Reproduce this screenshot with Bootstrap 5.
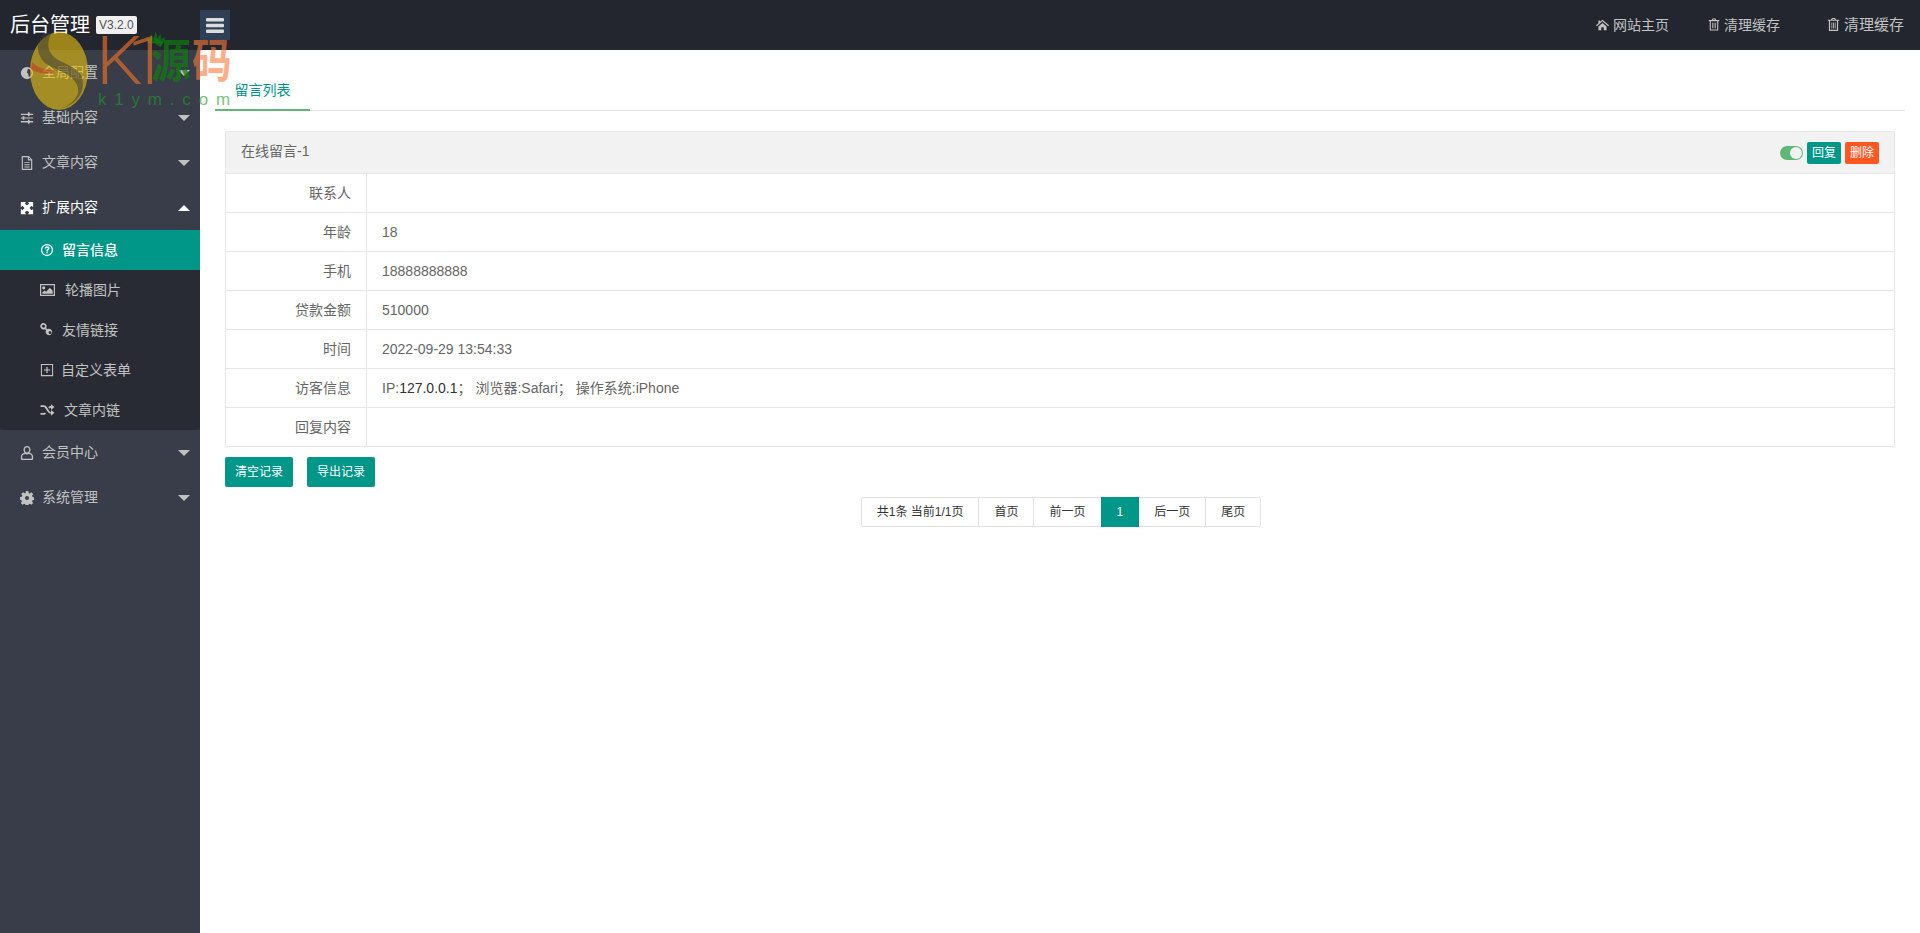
<!DOCTYPE html>
<html lang="zh-CN">
<head>
<meta charset="utf-8">
<title>后台管理</title>
<link href="https://cdn.jsdelivr.net/npm/bootstrap@5.3.0/dist/css/bootstrap.min.css" rel="stylesheet">
<style>
html,body{height:100%;}
body{font-family:"Liberation Sans","Noto Sans CJK SC",sans-serif;font-size:14px;color:#666;background:#fff;overflow:hidden;}
a{text-decoration:none;}
.top-bar{height:50px;background:#23262e;flex:none;}
.brand-area{width:200px;padding-left:10px;flex:none;}
.brand-name{font-size:20px;color:#fff;line-height:50px;}
.brand-ver{font-size:12px;background:#f0f0f0;color:#555;border-radius:2px;padding:0 3px;height:18px;line-height:18px;margin-left:6px;}
.menu-toggle{width:30px;height:30px;background:#2f4056;}
.top-link{color:#c2c2c2;font-size:14px;line-height:50px;}
.top-link svg{width:13px;height:13px;margin-right:4px;vertical-align:-1px;fill:#c2c2c2;}
.top-link.wide{font-size:15px;margin-left:47px;}
.top-link.mid{margin-left:39px;}
.top-link.mid svg{width:12px;}
.main-wrap{height:883px;}
.side-col{width:200px;background:#393d49;flex:none;}
.side-head{height:45px;color:#c2c2c2;padding-left:20px;padding-right:10px;}
.side-head.is-open{color:#fff;}
.side-head svg{width:14px;height:14px;margin-right:8px;fill:currentColor;flex:none;}
.tri{width:0;height:0;border-left:6px solid transparent;border-right:6px solid transparent;border-top:6px solid #c2c2c2;margin-left:auto;}
.tri.up{border-top:0;border-bottom:6px solid #fff;}
.side-sub{background:#282b33;border-radius:0 0 2px 2px;}
.side-child{height:40px;padding-left:40px;color:#c2c2c2;}
.side-child svg{width:14px;height:14px;margin-right:8px;fill:currentColor;flex:none;}
.side-child svg.ico-w{width:15px;margin-right:10px;}
.side-child svg.ico-m{margin-right:8px;}
.side-child svg.ico-p{margin-right:7px;}
.side-child svg.ico-r{width:15px;margin-right:9px;}
.side-child.is-active{background:#009688;color:#fff;font-weight:500;}
.body-col{padding:0 15px;min-width:0;}
.tab-strip{height:61px;border-bottom:1px solid #e6e6e6;}
.tab-item{width:95px;height:61px;color:#009688;border-bottom:2px solid #5fb878;text-align:center;padding-top:30px;line-height:20px;}
.msg-box{margin:20px 10px 0 10px;border:1px solid #e6e6e6;border-bottom:0;}
.msg-head{height:42px;background:#f2f2f2;padding:0 15px;border-bottom:1px solid #e6e6e6;}
.msg-title{margin-bottom:3px;}
.msg-sw{width:23px;height:14px;background:#5fb878;border-radius:7px;position:relative;margin-right:4px;}
.msg-sw::after{content:"";position:absolute;right:1px;top:1px;width:12px;height:12px;background:#f2f2f2;border-radius:50%;}
.mini-btn{height:22px;line-height:22px;width:34px;padding:0;font-size:12px;color:#fff;border:0;border-radius:2px;}
.mini-btn.teal{background:#009688;}
.mini-btn.red{background:#ff5722;margin-left:4px;}
.msg-table{margin:0;color:#666;font-size:14px;table-layout:fixed;border-collapse:separate;border-spacing:0;--bs-table-color:#666;}
.msg-table td{padding:0 15px;line-height:38px;height:39px;border-bottom:1px solid #e6e6e6;}
.msg-table td:first-child{width:141px;text-align:right;padding:0 15px 0 0;border-right:1px solid #e6e6e6;}
.msg-ip{color:#333;}
.action-row{margin:10px 10px 0;gap:14px;}
.act-btn{width:68px;height:30px;padding:0;line-height:30px;font-size:12px;color:#fff;background:#009688;border:0;border-radius:2px;}
.act-btn:hover{background:#009688;color:#fff;}
.pager-row{margin-top:10px;margin-left:2px;}
.pager-row .pagination{margin:0;--bs-pagination-border-color:#e2e2e2;--bs-pagination-color:#333;--bs-pagination-font-size:12px;--bs-pagination-padding-x:15px;--bs-pagination-padding-y:0;--bs-pagination-active-bg:#009688;--bs-pagination-active-border-color:#009688;--bs-pagination-border-radius:2px;}
.pager-row .page-link{height:30px;line-height:28px;}
.stamp{position:absolute;left:0;top:0;width:240px;height:115px;pointer-events:none;z-index:5;}
.stamp-art{position:absolute;left:30px;top:30px;width:140px;height:80px;overflow:visible;}
.stamp-k{position:absolute;left:96px;top:27px;font-size:66px;line-height:70px;color:#e8702a;opacity:.65;letter-spacing:-14px;font-family:Roboto,"Liberation Sans",sans-serif;font-weight:300;transform:scaleX(1.12);transform-origin:left center;}
.stamp-y,.stamp-m{position:absolute;top:36px;font-size:46px;line-height:50px;font-weight:700;transform:scaleX(.86);transform-origin:left center;}
.stamp-y{left:151px;color:#0f7a10;opacity:.72;}
.stamp-m{left:192px;color:#ff7a3a;opacity:.6;}
.stamp-u{position:absolute;left:98px;top:91px;font-size:17px;line-height:18px;letter-spacing:7.8px;color:#1f9a2a;opacity:.6;}
</style>
</head>
<body>
<svg width="0" height="0" class="d-none">
<symbol id="i-globe" viewBox="0 0 16 16"><path d="M8 1a7 7 0 1 0 0 14A7 7 0 0 0 8 1zM9 3l3.500 1.500L13.500 8 12 11.500 10 12.500 9.500 9 8 7.500 8.500 5z" fill-rule="evenodd"/></symbol>
<symbol id="i-slide" viewBox="0 0 16 16"><path d="M1 3h8V1.500h2V3h4v1.500h-4V6H9V4.500H1zM1 7.300h2V6h2v1.300h10v1.400H5V10H3V8.700H1zM1 11.500h8V10h2v1.500h4V13h-4v1.500H9V13H1z"/></symbol>
<symbol id="i-file" viewBox="0 0 16 16"><path d="M2 0h8l4 4v12H2zM3.300 1.300v13.400h9.400V5H9V1.300zM10.300 1.700V3.800h2.100zM5 7h6v1H5zM5 9.500h6v1H5zM5 12h6v1H5z" fill-rule="evenodd"/></symbol>
<symbol id="i-expand" viewBox="0 0 16 16"><path d="M1 1h6L5.500 2.800 8 5.200 10.500 2.800 9 1h6v6l-1.800-1.500L10.800 8l2.400 2.500L15 9v6H9l1.500-1.800L8 10.800l-2.500 2.400L7 15H1V9l1.800 1.500L5.200 8 2.800 5.500 1 7z"/></symbol>
<symbol id="i-help" viewBox="0 0 16 16"><path d="M8 1a7 7 0 1 0 0 14A7 7 0 0 0 8 1zm0 1.500a5.500 5.500 0 1 1 0 11 5.500 5.500 0 0 1 0-11zM5.300 6.300C5.500 4.700 6.600 3.800 8.100 3.800c1.600 0 2.700 1 2.700 2.300 0 1-.6 1.600-1.400 2.100-.5.300-.6.600-.6 1.100H7.200c0-1 .3-1.600 1-2.100.6-.4.900-.7.900-1.100 0-.5-.4-.8-1-.8s-1 .4-1.100 1zM7.200 10h1.600v1.600H7.200z" fill-rule="evenodd"/></symbol>
<symbol id="i-pic" viewBox="0 0 16 15" preserveAspectRatio="none"><path d="M0 1h16v13H0zM1.300 2.300v10.400h13.400V2.300zM4 3.500a1.700 1.700 0 1 1 0 3.400 1.700 1.700 0 0 1 0-3.400zM2.500 11.500v-1.500L5 8l1.500 1.300L10.500 5l3 3.200v3.300z" fill-rule="evenodd"/></symbol>
<symbol id="i-link" viewBox="0 0 16 16"><path d="M4 0a3.700 3.700 0 0 1 3 5.700L8.300 7A3.700 3.700 0 1 1 7 8.300L5.700 7A3.700 3.700 0 1 1 4 0zm0 2a1.700 1.700 0 1 0 0 3.400A1.700 1.700 0 0 0 4 2zm7.500 7.300a1.700 1.700 0 1 0 0 3.400 1.700 1.700 0 0 0 0-3.400z" fill-rule="evenodd"/></symbol>
<symbol id="i-plus" viewBox="0 0 16 16"><path d="M1 1h14v14H1zM2.200 2.200v11.600h11.600V2.200zM7.300 4.500h1.400v2.800h2.800v1.400H8.700v2.800H7.300V8.700H4.500V7.300h2.800z" fill-rule="evenodd"/></symbol>
<symbol id="i-rand" viewBox="0 0 16 16"><path d="M0 2.500h3.500c2 0 3 1 4 2.500L10 9c.7 1 1.200 1.500 2 1.500V8l4 3.200-4 3.300V12c-2 0-3-.8-4-2.300L5.500 6C4.800 5 4.400 4.500 3.500 4.500H0zM12 1.500l4 3.200-4 3.300V5.500c-.8 0-1.300.4-1.800 1.100L9 4.800C9.800 3.700 10.700 3.500 12 3.500zM0 11.500h3.500c.7 0 1.100-.4 1.500-1l1.200 1.700c-.7.900-1.500 1.300-2.700 1.300H0z"/></symbol>
<symbol id="i-user" viewBox="0 0 16 16"><path d="M8 0c2.300 0 4 1.800 4 4.300 0 1.300-.5 2.500-1.200 3.300C13 8 15 9.500 15 12v2.500C15 15.300 14.300 16 13.500 16h-11C1.700 16 1 15.300 1 14.500V12c0-2.500 2-4 4.200-4.400C4.500 6.800 4 5.600 4 4.300 4 1.800 5.700 0 8 0zm0 1.500c-1.500 0-2.500 1.200-2.500 2.800S6.500 7.500 8 7.500s2.500-1.600 2.500-3.200S9.500 1.500 8 1.500zM6.300 9C4 9 2.500 10 2.500 12v2c0 .3.200.5.500.5h10c.3 0 .5-.2.500-.5v-2c0-2-1.500-3-3.800-3-.8.500-1.600.7-1.700.7s-.9-.2-1.700-.7z" fill-rule="evenodd"/></symbol>
<symbol id="i-cog" viewBox="0 0 16 16"><path d="M6.500 0h3l.4 2.200 1.300.6L13.100 1.500l2 2.200-1.300 1.800.5 1.300 2.200.4v3l-2.200.4-.5 1.300 1.300 1.800-2.100 2.100-1.800-1.300-1.300.5-.4 2.200h-3l-.4-2.200-1.300-.5-1.800 1.300-2.100-2.100 1.300-1.800-.5-1.300L0 9.900v-3l2.200-.4.500-1.300L1.400 3.400l2.100-2 1.800 1.300 1.300-.5zM8 5.800a2.300 2.300 0 1 0 0 4.600 2.300 2.300 0 0 0 0-4.600z" fill-rule="evenodd"/></symbol>
<symbol id="i-home" viewBox="0 0 16 16"><path d="M8 2 16 9l-1 1-7-6-7 6-1-1 3-2.600V3h2v1.700zM3 10.500 8 6l5 4.500V15H9.500v-3.500h-3V15H3z"/></symbol>
<symbol id="i-trash" viewBox="0 0 16 16"><path d="M6 0h4l1 2h4v1.500h-1.300V16H2.300V3.500H1V2h4zM7 1.200 6.500 2h3L9 1.200zM3.800 3.500v11h8.400v-11zM5.500 5.500h1v7.500h-1zM7.500 5.500h1v7.500h-1zM9.500 5.500h1v7.500h-1z" fill-rule="evenodd"/></symbol>
</svg>

<header class="top-bar d-flex align-items-center">
  <div class="brand-area d-flex align-items-center">
    <span class="brand-name">后台管理</span><span class="brand-ver">V3.2.0</span>
  </div>
  <button class="menu-toggle btn p-0 border-0 rounded-0 d-flex justify-content-center align-items-center" aria-label="menu">
    <svg width="18" height="15" viewBox="0 0 18 15"><path d="M1 0h16a1 1 0 0 1 1 1v1.500a1 1 0 0 1-1 1H1a1 1 0 0 1-1-1V1a1 1 0 0 1 1-1zM1 5.800h16a1 1 0 0 1 1 1v1.400a1 1 0 0 1-1 1H1a1 1 0 0 1-1-1V6.800a1 1 0 0 1 1-1zM1 11.500h16a1 1 0 0 1 1 1V14a1 1 0 0 1-1 1H1a1 1 0 0 1-1-1v-1.500a1 1 0 0 1 1-1z" fill="#dcdcdc"/></svg>
  </button>
  <nav class="ms-auto d-flex pe-3">
    <a class="top-link" href="#"><svg><use href="#i-home"/></svg>网站主页</a>
    <a class="top-link mid" href="#"><svg><use href="#i-trash"/></svg>清理缓存</a>
    <a class="top-link wide" href="#"><svg><use href="#i-trash"/></svg>清理缓存</a>
  </nav>
</header>

<div class="main-wrap d-flex">
  <aside class="side-col d-flex flex-column">
    <a class="side-head d-flex align-items-center" href="#"><svg><use href="#i-globe"/></svg>全局配置<span class="tri"></span></a>
    <a class="side-head d-flex align-items-center" href="#"><svg><use href="#i-slide"/></svg>基础内容<span class="tri"></span></a>
    <a class="side-head d-flex align-items-center" href="#"><svg><use href="#i-file"/></svg>文章内容<span class="tri"></span></a>
    <a class="side-head is-open d-flex align-items-center" href="#"><svg><use href="#i-expand"/></svg>扩展内容<span class="tri up"></span></a>
    <div class="side-sub">
      <a class="side-child is-active d-flex align-items-center" href="#"><svg><use href="#i-help"/></svg>留言信息</a>
      <a class="side-child d-flex align-items-center" href="#"><svg class="ico-w"><use href="#i-pic"/></svg>轮播图片</a>
      <a class="side-child d-flex align-items-center" href="#"><svg class="ico-m"><use href="#i-link"/></svg>友情链接</a>
      <a class="side-child d-flex align-items-center" href="#"><svg class="ico-p"><use href="#i-plus"/></svg>自定义表单</a>
      <a class="side-child d-flex align-items-center" href="#"><svg class="ico-r"><use href="#i-rand"/></svg>文章内链</a>
    </div>
    <a class="side-head d-flex align-items-center" href="#"><svg><use href="#i-user"/></svg>会员中心<span class="tri"></span></a>
    <a class="side-head d-flex align-items-center" href="#"><svg><use href="#i-cog"/></svg>系统管理<span class="tri"></span></a>
  </aside>

  <main class="body-col flex-grow-1">
    <div class="tab-strip"><div class="tab-item">留言列表</div></div>
    <section class="msg-box">
      <div class="msg-head d-flex align-items-center">
        <span class="msg-title">在线留言-1</span>
        <span class="msg-sw ms-auto"></span>
        <button class="mini-btn teal">回复</button>
        <button class="mini-btn red">删除</button>
      </div>
      <table class="table table-borderless msg-table">
        <tbody>
          <tr><td>联系人</td><td></td></tr>
          <tr><td>年龄</td><td>18</td></tr>
          <tr><td>手机</td><td>18888888888</td></tr>
          <tr><td>贷款金额</td><td>510000</td></tr>
          <tr><td>时间</td><td>2022-09-29 13:54:33</td></tr>
          <tr><td>访客信息</td><td>IP:<span class="msg-ip">127.0.0.1</span>；&nbsp;浏览器:Safari；&nbsp;操作系统:iPhone</td></tr>
          <tr><td>回复内容</td><td></td></tr>
        </tbody>
      </table>
    </section>
    <div class="action-row d-flex">
      <button class="btn act-btn">清空记录</button>
      <button class="btn act-btn">导出记录</button>
    </div>
    <nav class="pager-row d-flex justify-content-center">
      <ul class="pagination">
        <li class="page-item"><span class="page-link">共1条 当前1/1页</span></li>
        <li class="page-item"><a class="page-link" href="#">首页</a></li>
        <li class="page-item"><a class="page-link" href="#">前一页</a></li>
        <li class="page-item active"><a class="page-link" href="#">1</a></li>
        <li class="page-item"><a class="page-link" href="#">后一页</a></li>
        <li class="page-item"><a class="page-link" href="#">尾页</a></li>
      </ul>
    </nav>
  </main>
</div>

<div class="stamp">
  <svg class="stamp-art" viewBox="0 0 140 80">
    <ellipse cx="29" cy="41" rx="29" ry="39" fill="#e6bf10" opacity=".62"/>
    <path d="M14 3C6 12 6 24 14 32C22 40 44 42 48 58C50 66 42 74 33 78C46 74 56 62 52 48C48 34 26 34 20 22C17 16 18 8 22 3Z" fill="#35353a" opacity=".5"/>
    <path d="M2 32c6 6 14 9 26 8-5 4-20 5-27-1z" fill="#c23a2a" opacity=".6"/>
    <path d="M118 14l-2-7 4 3 1-6 3 5 2-8 2 8 3-5 1 6 4-3-2 7z" fill="#0f7a10" opacity=".72" transform="translate(6 0) scale(.95)"/>
  </svg>
  <span class="stamp-k">K1</span>
  <span class="stamp-y">源</span>
  <span class="stamp-m">码</span>
  <span class="stamp-u">k1ym.com</span>
</div>
</body>
</html>
